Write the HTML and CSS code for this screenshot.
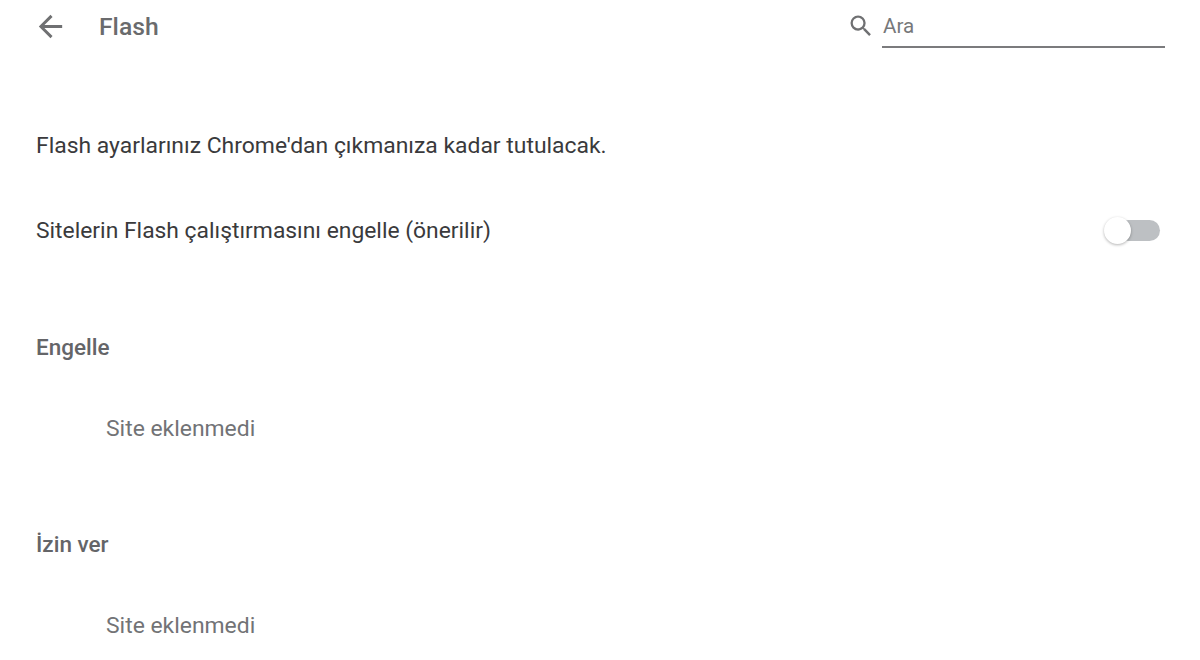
FILE: index.html
```html
<!DOCTYPE html>
<html lang="tr">
<head>
    <meta charset="UTF-8">
    <meta name="viewport" content="width=device-width, initial-scale=1.0">
    <title>Flash</title>
    <link rel="stylesheet" href="styles.css">
</head>
<body>
    <header class="toolbar">
        <div class="toolbar-left">
            <svg class="back-icon" width="35" height="35" viewBox="0 0 24 24"><path d="M20 11H7.83l5.59-5.59L12 4l-8 8 8 8 1.41-1.41L7.83 13H20v-2z"/></svg>
            <h1>Flash</h1>
        </div>
        <div class="search">
            <svg class="search-icon" width="28" height="28" viewBox="0 0 24 24"><path d="M15.5 14h-.79l-.28-.27A6.47 6.47 0 0 0 16 9.5 6.5 6.5 0 1 0 9.5 16c1.61 0 3.09-.59 4.23-1.57l.27.28v.79l5 4.99L20.49 19l-4.99-5zm-6 0C7.01 14 5 11.99 5 9.5S7.01 5 9.5 5 14 7.01 14 9.5 11.99 14 9.5 14z"/></svg>
            <div class="search-box">Ara</div>
        </div>
    </header>
    <main class="content">
        <p class="notice">Flash ayarlarınız Chrome'dan çıkmanıza kadar tutulacak.</p>
        <div class="setting-row">
            <span>Sitelerin Flash çalıştırmasını engelle (önerilir)</span>
            <div class="toggle"><div class="toggle-knob"></div></div>
        </div>
        <section class="site-group group-block">
            <h2>Engelle</h2>
            <p class="empty">Site eklenmedi</p>
        </section>
        <section class="site-group group-allow">
            <h2>İzin ver</h2>
            <p class="empty">Site eklenmedi</p>
        </section>
    </main>
</body>
</html>
```

FILE: styles.css
```css
html, body {
    height: 100%;
}
body {
    font-family: Roboto, "Liberation Sans", sans-serif;
    margin: 0;
    padding: 0;
    background: #fff;
    color: #3a3a3c;
    overflow: hidden;
}
.toolbar {
    display: flex;
    justify-content: space-between;
    align-items: flex-start;
    height: 48px;
    padding: 0 35px 0 36px;
}
.toolbar-left {
    display: flex;
    align-items: center;
    height: 53px;
}
.back-icon {
    fill: #6f7072;
    margin-left: -3px;
}
.toolbar h1 {
    margin: 0 0 0 31px;
    font-size: 24.7px;
    font-weight: 500;
    color: #6a6b6d;
}
.search {
    display: flex;
    align-items: flex-start;
}
.search-icon {
    fill: #6f7072;
    margin: 12px 7px 0 0;
}
.search-box {
    width: 283px;
    height: 48px;
    padding-left: 1px;
    line-height: 53px;
    box-sizing: border-box;
    border-bottom: 2px solid #7b7b7d;
    font-size: 20.6px;
    color: #77787a;
}
.content {
    padding: 0 35px 0 36px;
}
.notice {
    margin: 83px 0 0 0;
    font-size: 22.9px;
    line-height: 30px;
}
.setting-row {
    display: flex;
    justify-content: space-between;
    align-items: center;
    margin-top: 53px;
    height: 32px;
    font-size: 22.85px;
    padding-right: 5px;
}
.toggle {
    position: relative;
    width: 42px;
    height: 21px;
    border-radius: 11px;
    background: #bdc0c3;
}
.toggle-knob {
    position: absolute;
    left: -14px;
    top: -3px;
    width: 27px;
    height: 27px;
    border-radius: 50%;
    background: #fff;
    box-shadow: 0 1px 3px rgba(0, 0, 0, 0.3);
}
.site-group h2 {
    margin: 0;
    font-size: 22.5px;
    line-height: 30px;
    font-weight: 500;
    color: #646568;
}
.group-block {
    margin-top: 86px;
}
.group-allow {
    margin-top: 85px;
}
.empty {
    margin: 52px 0 0 70px;
    font-size: 22.9px;
    line-height: 30px;
    color: #727376;
}
```
